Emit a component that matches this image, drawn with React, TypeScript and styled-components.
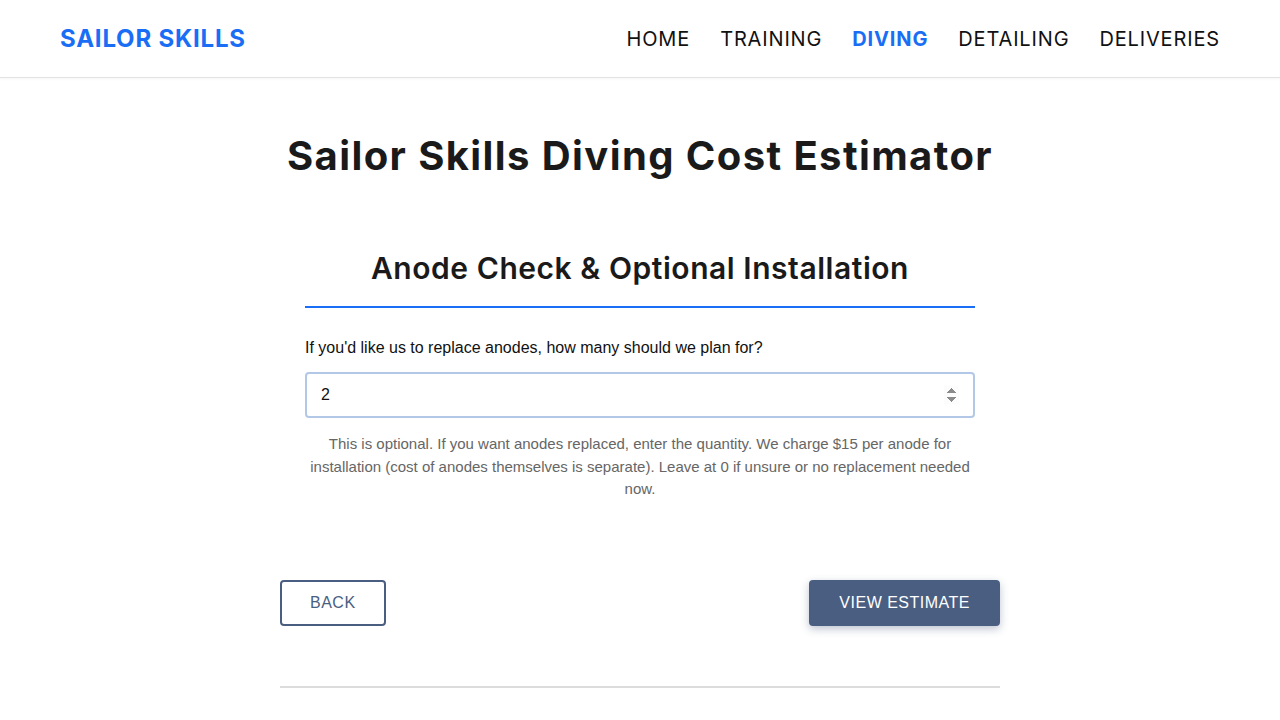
import React from "react";
import styled, { createGlobalStyle } from "styled-components";

const Global = createGlobalStyle`
  html, body { margin: 0; padding: 0; background: #fff; }
  body { font-family: "Liberation Sans", Arial, sans-serif; color: #111; }
  * { box-sizing: border-box; }
`;

const Header = styled.header`
  height: 78px;
  display: flex;
  align-items: center;
  justify-content: space-between;
  padding: 0 60px;
  border-bottom: 1px solid #e2e2e2;
  box-shadow: 0 1px 3px rgba(0,0,0,0.04);
`;

const Logo = styled.div`
  font-family: Inter, "Noto Sans", sans-serif;
  font-weight: 700;
  font-size: 24px;
  color: #1a6ef5;
  letter-spacing: 0.8px;
`;

const Nav = styled.nav`
  display: flex;
  gap: 30px;
`;

const NavLink = styled.a<{ $active?: boolean }>`
  font-family: Inter, "Noto Sans", sans-serif;
  font-size: 20px;
  font-weight: ${(p) => (p.$active ? 700 : 400)};
  color: ${(p) => (p.$active ? "#1a6ef5" : "#111")};
  text-decoration: none;
  letter-spacing: 0.85px;
`;

const Main = styled.main`
  width: 720px;
  margin: 0 auto;
  display: flex;
  flex-direction: column;
  align-items: stretch;
`;

const Title = styled.h1`
  font-family: Inter, "Noto Sans", sans-serif;
  font-weight: 700;
  font-size: 40px;
  color: #1a1a1a;
  text-align: center;
  margin: 52px 0 0;
  line-height: 52px;
  letter-spacing: 1.4px;
`;

const Section = styled.section`
  padding: 0 25px;
  margin-top: 66px;
`;

const SectionTitle = styled.h2`
  font-family: Inter, "Noto Sans", sans-serif;
  font-weight: 600;
  font-size: 30px;
  color: #1a1a1a;
  text-align: center;
  margin: 0;
  line-height: 40px;
  padding-bottom: 18px;
  border-bottom: 2px solid #1a6ef5;
  letter-spacing: 0.55px;
`;

const Label = styled.label`
  display: block;
  font-size: 16px;
  color: #111;
  margin-top: 30px;
  line-height: 20px;
`;

const Input = styled.input`
  display: block;
  width: 100%;
  height: 46px;
  margin-top: 14px;
  padding: 0 14px;
  border: 2px solid #b3c8e6;
  border-radius: 4px;
  font-family: "Liberation Sans", Arial, sans-serif;
  font-size: 16px;
  color: #111;
  outline: none;
  &::-webkit-inner-spin-button,
  &::-webkit-outer-spin-button {
    opacity: 1;
  }
`;

const Help = styled.p`
  margin: 15px 0 0;
  text-align: center;
  font-size: 15px;
  line-height: 22.5px;
  color: #666;
`;

const Actions = styled.div`
  display: flex;
  justify-content: space-between;
  margin-top: 79px;
`;

const Button = styled.button<{ $primary?: boolean }>`
  height: 46px;
  padding: 0 28px;
  border-radius: 4px;
  font-family: "Liberation Sans", Arial, sans-serif;
  font-size: 16px;
  letter-spacing: 0.5px;
  cursor: pointer;
  border: 2px solid #4a5e82;
  background: ${(p) => (p.$primary ? "#4a5e82" : "#fff")};
  color: ${(p) => (p.$primary ? "#fff" : "#4a5e82")};
  box-shadow: ${(p) => (p.$primary ? "0 3px 8px rgba(40,60,100,0.3)" : "none")};
`;

const Divider = styled.hr`
  margin: 60px 0 0;
  border: none;
  border-top: 2px solid #dcdcdc;
`;

export default function App() {
  return (
    <>
      <Global />
      <Header>
        <Logo>SAILOR SKILLS</Logo>
        <Nav>
          <NavLink href="#">HOME</NavLink>
          <NavLink href="#">TRAINING</NavLink>
          <NavLink href="#" $active>DIVING</NavLink>
          <NavLink href="#">DETAILING</NavLink>
          <NavLink href="#">DELIVERIES</NavLink>
        </Nav>
      </Header>
      <Main>
        <Title>Sailor Skills Diving Cost Estimator</Title>
        <Section>
          <SectionTitle>Anode Check &amp; Optional Installation</SectionTitle>
          <Label htmlFor="anodes">If you'd like us to replace anodes, how many should we plan for?</Label>
          <Input id="anodes" type="number" defaultValue={2} min={0} />
          <Help>
            This is optional. If you want anodes replaced, enter the quantity. We charge $15 per anode for installation (cost of anodes themselves is separate). Leave at 0 if unsure or no replacement needed now.
          </Help>
        </Section>
        <Actions>
          <Button>BACK</Button>
          <Button $primary>VIEW ESTIMATE</Button>
        </Actions>
        <Divider />
      </Main>
    </>
  );
}
